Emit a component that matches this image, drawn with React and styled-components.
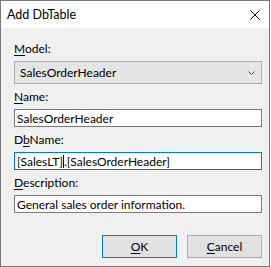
import React from "react";
import styled, { createGlobalStyle } from "styled-components";

const Global = createGlobalStyle`
  html, body { margin: 0; padding: 0; background: #ffffff; }
  body { font-family: "Segoe UI", Lato, "Noto Sans", sans-serif; font-size: 12px; color: #000; }
  * { box-sizing: border-box; }
`;

const Window = styled.div`
  width: 270px;
  height: 267px;
  border: 1px solid #7a7a7a;
  display: flex;
  flex-direction: column;
  background: #f0f0f0;
`;

const TitleBar = styled.div`
  height: 27px;
  flex: none;
  background: #ffffff;
  display: flex;
  align-items: center;
  justify-content: space-between;
  padding: 0 9px 0 6px;
  font-size: 12.5px;
`;

const Body = styled.div`
  flex: 1;
  display: flex;
  flex-direction: column;
  padding: 13px 7px 8px 13px;
`;

const Label = styled.div`
  height: 16px;
  line-height: 16px;
  margin-top: ${(p) => (p.$first ? 0 : 5)}px;
  margin-bottom: 4px;
`;

const U = styled.span`
  text-decoration: underline;
  text-underline-offset: 2px;
`;

const Combo = styled.div`
  height: 23px;
  border: 1px solid #adadad;
  background: #e5e5e5;
  display: flex;
  align-items: center;
  justify-content: space-between;
  padding: 0 6px 0 5px;
`;

const Input = styled.div`
  height: 18px;
  border: 1px solid ${(p) => (p.$focused ? "#0078d7" : "#7a7a7a")};
  background: #ffffff;
  display: flex;
  align-items: center;
  padding-left: 2px;
  white-space: nowrap;
`;

const Caret = styled.span`
  display: inline-block;
  width: 1px;
  height: 13px;
  background: #000;
`;

const Buttons = styled.div`
  margin-top: 22px;
  display: flex;
  justify-content: flex-end;
  gap: 10px;
`;

const Button = styled.div`
  width: 75px;
  height: 23px;
  background: #e1e1e1;
  border: 1px solid ${(p) => (p.$default ? "#0078d7" : "#adadad")};
  display: flex;
  align-items: center;
  justify-content: center;
`;

export default function App() {
  return (
    <>
      <Global />
      <Window>
        <TitleBar>
          <span>Add DbTable</span>
          <svg width="10" height="10" viewBox="0 0 10 10">
            <path d="M0.5 0.5 L9.5 9.5 M9.5 0.5 L0.5 9.5" stroke="#000" strokeWidth="1" fill="none" />
          </svg>
        </TitleBar>
        <Body>
          <Label $first>
            <U>M</U>odel:
          </Label>
          <Combo>
            <span>SalesOrderHeader</span>
            <svg width="7" height="4" viewBox="0 0 7 4">
              <path d="M0.5 0.5 L3.5 3.5 L6.5 0.5" stroke="#444" strokeWidth="1" fill="none" />
            </svg>
          </Combo>
          <Label>
            <U>N</U>ame:
          </Label>
          <Input>SalesOrderHeader</Input>
          <Label>
            D<U>b</U>Name:
          </Label>
          <Input $focused>
            [SalesLT]
            <Caret />
            .[SalesOrderHeader]
          </Input>
          <Label>
            <U>D</U>escription:
          </Label>
          <Input>General sales order information.</Input>
          <Buttons>
            <Button $default>
              <span>
                <U>O</U>K
              </span>
            </Button>
            <Button>
              <span>
                <U>C</U>ancel
              </span>
            </Button>
          </Buttons>
        </Body>
      </Window>
    </>
  );
}
